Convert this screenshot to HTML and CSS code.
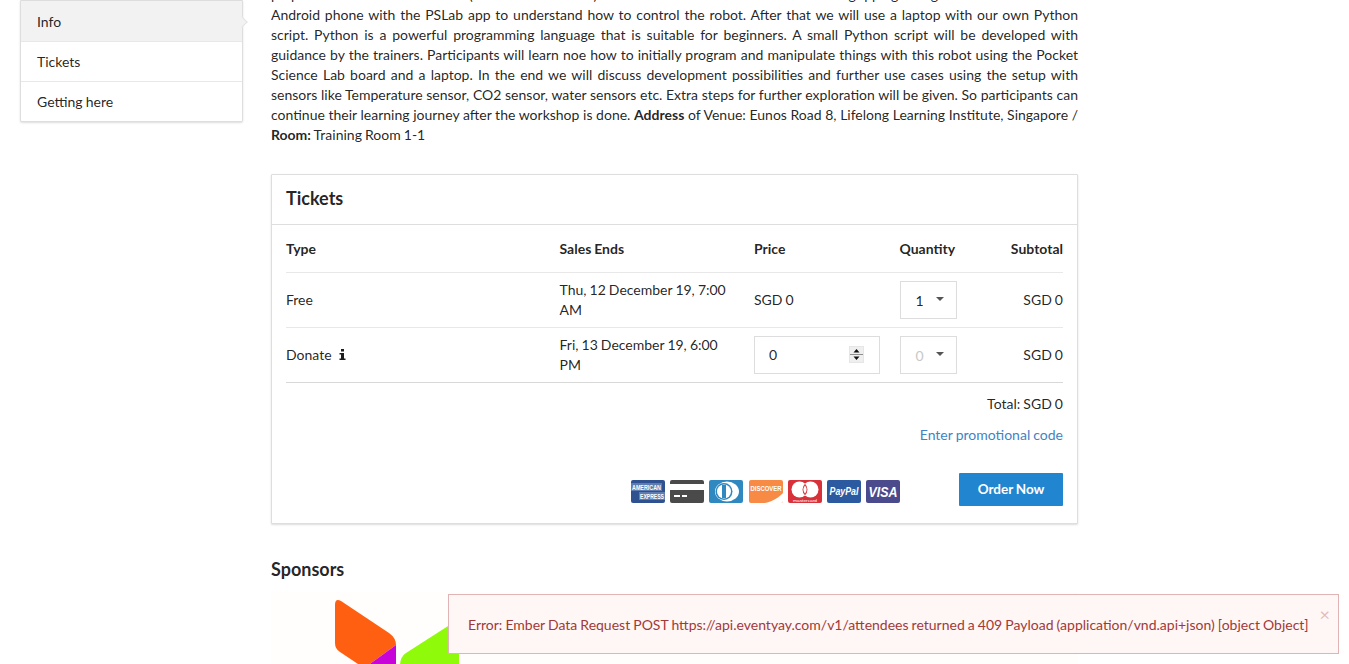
FILE: index.html
```html
<!DOCTYPE html>
<html lang="en">
<head>
    <meta charset="UTF-8">
    <meta name="viewport" content="width=device-width, initial-scale=1.0">
    <title>Event</title>
    <link rel="stylesheet" href="styles.css">
</head>
<body>
    <div class="page">
        <aside class="side-menu">
            <a class="side-item active" href="#info">Info</a>
            <a class="side-item" href="#tickets">Tickets</a>
            <a class="side-item" href="#location">Getting here</a>
        </aside>
        <main class="content">
            <p class="description">
                <span class="line">prepare the robot (Pocket Science) and we start the gripping gestures on an</span>
                <span class="line">Android phone with the PSLab app to understand how to control the robot. After that we will use a laptop with our own Python</span>
                <span class="line">script. Python is a powerful programming language that is suitable for beginners. A small Python script will be developed with</span>
                <span class="line">guidance by the trainers. Participants will learn noe how to initially program and manipulate things with this robot using the Pocket</span>
                <span class="line">Science Lab board and a laptop. In the end we will discuss development possibilities and further use cases using the setup with</span>
                <span class="line">sensors like Temperature sensor, CO2 sensor, water sensors etc. Extra steps for further exploration will be given. So participants can</span>
                <span class="line">continue their learning journey after the workshop is done. <b>Address</b> of Venue: Eunos Road 8, Lifelong Learning Institute, Singapore /</span>
                <span class="line last"><b>Room:</b> Training Room 1-1</span>
            </p>

            <section class="tickets" id="tickets">
                <h2 class="tickets-title">Tickets</h2>
                <div class="tickets-body">
                    <table class="ticket-table">
                        <thead>
                            <tr>
                                <th class="col-type">Type</th>
                                <th class="col-ends">Sales Ends</th>
                                <th class="col-price">Price</th>
                                <th class="col-qty">Quantity</th>
                                <th class="col-sub">Subtotal</th>
                            </tr>
                        </thead>
                        <tbody>
                            <tr>
                                <td>Free</td>
                                <td>Thu, 12 December 19, 7:00 AM</td>
                                <td>SGD 0</td>
                                <td><div class="qty-select">1<span class="caret"></span></div></td>
                                <td class="col-sub">SGD 0</td>
                            </tr>
                            <tr>
                                <td>Donate
                                    <svg class="info-icon" width="7" height="11" viewBox="0 0 7 11"><path d="M2 0h3v2.500H2zM.5 4H5v5.500h1.500V11H.5V9.500H2V5.500H.5z" fill="#1b1c1d"/></svg>
                                </td>
                                <td>Fri, 13 December 19, 6:00 PM</td>
                                <td>
                                    <div class="donate-input">0
                                        <span class="spinner">
                                            <svg width="15" height="17" viewBox="0 0 15 17">
                                                <rect width="15" height="17" fill="#e6e6e6"/>
                                                <rect x="1" y="1" width="13" height="15" fill="#8f8f8f"/>
                                                <rect x="1" y="1" width="13" height="7" fill="#efefef"/>
                                                <rect x="1" y="9" width="13" height="7" fill="#efefef"/>
                                                <path d="M7.500 3l3 3.500h-6zM4.500 10.500h6l-3 3.500z" fill="#111"/>
                                            </svg>
                                        </span>
                                    </div>
                                </td>
                                <td><div class="qty-select disabled"><span class="qty-value">0</span><span class="caret"></span></div></td>
                                <td class="col-sub">SGD 0</td>
                            </tr>
                        </tbody>
                    </table>
                    <div class="total">Total: SGD 0</div>
                    <a class="promo-link" href="#">Enter promotional code</a>
                    <div class="order-row">
                        <div class="pay-icons">
                            <svg class="pay-icon" viewBox="0 0 34 23"><rect width="34" height="23" rx="2" fill="#2f5190"/><rect y="3" width="31" height="8" fill="#5f7cb0"/><rect x="8" y="12" width="26" height="8" fill="#5f7cb0"/><text x="1" y="10" textLength="29" lengthAdjust="spacingAndGlyphs" class="pay-text amex">AMERICAN</text><text x="9" y="19" textLength="24" lengthAdjust="spacingAndGlyphs" class="pay-text amex">EXPRESS</text></svg>
                            <svg class="pay-icon" viewBox="0 0 34 23"><rect width="34" height="23" rx="2" fill="#4a4a4a"/><rect y="4" width="34" height="6" fill="#fff"/><rect x="4" y="15" width="6" height="2" fill="#fff"/><rect x="12" y="15" width="5" height="2" fill="#fff"/></svg>
                            <svg class="pay-icon" viewBox="0 0 34 23"><rect width="34" height="23" rx="2" fill="#2f88c0"/><ellipse cx="18" cy="11.500" rx="12" ry="10" fill="#fff"/><circle cx="15" cy="11.500" r="8.500" fill="#2f88c0"/><circle cx="15" cy="11.500" r="7" fill="#fff"/><rect x="13" y="5" width="4" height="13" fill="#2f88c0"/></svg>
                            <svg class="pay-icon" viewBox="0 0 34 23"><rect width="34" height="23" rx="2" fill="#f78b45"/><path d="M34 13V21a2 2 0 0 1-2 2H16C25 21 30 17 34 13z" fill="#fff"/><text x="1.500" y="11" textLength="31" lengthAdjust="spacingAndGlyphs" class="pay-text disc">DISCOVER</text></svg>
                            <svg class="pay-icon" viewBox="0 0 34 23"><rect width="34" height="23" rx="2" fill="#d8313a"/><circle cx="11.500" cy="9.500" r="8" fill="#fff"/><circle cx="22.500" cy="9.500" r="8" fill="#fff"/><path d="M17 3.700a8 8 0 0 1 0 11.600a8 8 0 0 1 0-11.600z" fill="#d8313a"/><path d="M17 5.500a6.500 6.500 0 0 1 0 8a6.500 6.500 0 0 1 0-8z" fill="#fff"/><text x="5" y="21.500" textLength="24" lengthAdjust="spacingAndGlyphs" class="pay-text master">mastercard</text></svg>
                            <svg class="pay-icon" viewBox="0 0 34 23"><rect width="34" height="23" rx="2" fill="#2c5aa0"/><text x="2.500" y="14.500" textLength="29" lengthAdjust="spacingAndGlyphs" class="pay-text paypal">PayPal</text></svg>
                            <svg class="pay-icon" viewBox="0 0 34 23"><rect width="34" height="23" rx="2" fill="#4a4a8c"/><text x="2.500" y="17" textLength="29" lengthAdjust="spacingAndGlyphs" class="pay-text visa">VISA</text></svg>
                        </div>
                        <button class="order-btn" type="button">Order Now</button>
                    </div>
                </div>
            </section>

            <h2 class="sponsors-title">Sponsors</h2>
            <div class="sponsor-logo">
                <svg width="190" height="74" viewBox="0 0 190 74">
                    <path d="M64 13Q64 6 70 9L118 41Q125 46 125 53L96 74H90L69 60Q64 57 64 51z" fill="#ff5f10"/>
                    <path d="M125 53V74H96z" fill="#c805d8"/>
                    <path d="M129 74Q129 65 135 61L188 27V74z" fill="#8ffa0a"/>
                </svg>
            </div>
        </main>
    </div>

    <div class="error-toast">
        <button class="toast-close" type="button">&times;</button>
        Error: Ember Data Request POST https://api.eventyay.com/v1/attendees returned a 409 Payload (application/vnd.api+json) [object Object]
    </div>
</body>
</html>
```
FILE: styles.css
```css
html, body {
    margin: 0;
    height: 664px;
    overflow: hidden;
    background-color: #fff;
}
body {
    font-family: Lato, "Open Sans", sans-serif;
    font-size: 14px;
    line-height: 20px;
    word-spacing: -.5px;
    color: rgba(0, 0, 0, .87);
}
.page {
    display: flex;
    align-items: flex-start;
    padding-left: 20px;
}

/* left menu */
.side-menu {
    width: 223px;
    flex: none;
    box-sizing: border-box;
    border: 1px solid rgba(34, 36, 38, .15);
    border-top-color: #ddd;
    box-shadow: 0 1px 2px 0 rgba(34, 36, 38, .15);
    border-radius: 0 0 2px 2px;
    margin-right: 28px;
}
.side-item {
    display: block;
    height: 40px;
    padding: 10px 16px 0;
    box-sizing: border-box;
    color: rgba(0, 0, 0, .87);
    text-decoration: none;
    border-top: 1px solid #e8e8e9;
    position: relative;
}
.side-item:first-child {
    border-top: 0;
    height: 40px;
    padding-top: 11px;
}
.side-item.active {
    background-color: #f2f2f2;
}
.side-item.active::after {
    content: "";
    position: absolute;
    right: -4px;
    top: 17px;
    width: 7px;
    height: 7px;
    background-color: #f2f2f2;
    border: 1px solid #e4e4e4;
    border-width: 1px 1px 0 0;
    transform: rotate(45deg);
}

/* main column */
.content {
    width: 807px;
    flex: none;
    margin-top: -15px;
}
.description {
    margin: 0 0 29px;
}
.line {
    display: block;
    text-align: justify;
    text-align-last: justify;
}
.line.last {
    text-align-last: left;
}
.tickets {
    border: 1px solid rgba(34, 36, 38, .15);
    box-shadow: 0 1px 2px 0 rgba(34, 36, 38, .15);
    border-radius: 1px;
    height: 350px;
    box-sizing: border-box;
}
.tickets-title {
    margin: 0;
    height: 50px;
    box-sizing: border-box;
    padding: 13px 14px 0;
    font-size: 18px;
    line-height: 20px;
    font-weight: 700;
    border-bottom: 1px solid rgba(34, 36, 38, .15);
}
.tickets-body {
    padding: 0 14px;
}
.ticket-table {
    width: 777px;
    border-collapse: collapse;
    table-layout: fixed;
}
.ticket-table th {
    height: 47px;
    padding: 0;
    text-align: left;
    font-weight: 700;
    border-bottom: 1px solid #e8e8e9;
}
.ticket-table td {
    height: 54px;
    padding: 0;
    border-bottom: 1px solid #d8d8d9;
}
.ticket-table tbody tr:first-child td {
    border-bottom-color: #e8e8e9;
}
.col-type { width: 273.500px; }
.col-ends { width: 194.500px; }
.col-price { width: 145.500px; }
.col-qty { width: 85.500px; }
.ticket-table .col-sub {
    text-align: right;
}
.ticket-table td:nth-child(2) {
    padding-right: 20px;
}
.info-icon {
    margin-left: 4px;
}
.qty-select {
    width: 57px;
    height: 38px;
    box-sizing: border-box;
    border: 1px solid #ddd;
    padding: 9px 0 0 15px;
    font-size: 14px;
    position: relative;
}
.qty-select.disabled .qty-value {
    color: #c8c8c8;
}
.caret {
    position: absolute;
    left: 35px;
    top: 15px;
    border: 4px solid transparent;
    border-top: 4px solid #555;
    border-bottom: 0;
}
.donate-input {
    width: 126px;
    height: 38px;
    box-sizing: border-box;
    border: 1px solid #ddd;
    padding: 8px 14px;
    position: relative;
}
.spinner {
    position: absolute;
    right: 15px;
    top: 9px;
    height: 17px;
    line-height: 0;
}
.total {
    text-align: right;
    margin-top: 11px;
}
.promo-link {
    display: block;
    text-align: right;
    margin-top: 11px;
    color: #4183c4;
    text-decoration: none;
}
.order-row {
    display: flex;
    justify-content: flex-end;
    align-items: flex-start;
    margin-top: 28px;
}
.pay-icons {
    display: flex;
    gap: 5.17px;
    margin: 7px 59px 0 0;
}
.pay-icon {
    width: 34px;
    height: 23px;
    display: block;
}
.pay-text {
    font-family: "Liberation Sans", sans-serif;
    fill: #fff;
}
.amex { font-size: 7px; font-weight: 700; }
.disc { font-size: 7px; font-weight: 700; }
.master { font-size: 3.500px; }
.paypal { font-size: 10px; font-weight: 700; font-style: italic; }
.visa { font-size: 14px; font-weight: 700; font-style: italic; }
.order-btn {
    width: 104px;
    height: 33px;
    border: 0;
    border-radius: 1px;
    background-color: #2185d0;
    color: #fff;
    font-family: inherit;
    font-size: 13.500px;
    font-weight: 700;
    word-spacing: -.5px;
    padding: 0 0 2px;
}

/* sponsors */
.sponsors-title {
    margin: 33px 0 0;
    font-size: 18px;
    line-height: 24px;
    font-weight: 700;
}
.sponsor-logo {
    margin-top: 11px;
    height: 74px;
    background-color: #fffefc;
    overflow: hidden;
}
.sponsor-logo svg {
    display: block;
}

/* error message over the page */
.error-toast {
    position: fixed;
    left: 448px;
    top: 594px;
    width: 891px;
    height: 60px;
    box-sizing: border-box;
    padding: 20px 19px;
    background-color: #fff6f6;
    border: 1px solid #e0b4b4;
    color: #9f3a38;
    white-space: nowrap;
}
.toast-close {
    position: absolute;
    right: 8px;
    top: 9px;
    padding: 0;
    border: 0;
    background: none;
    font-family: inherit;
    font-size: 18px;
    line-height: 20px;
    color: #9f3a38;
    opacity: .3;
}
```
